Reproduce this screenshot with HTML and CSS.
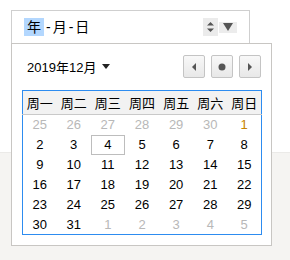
FILE: index.html
```html
<!DOCTYPE html>
<html lang="zh-CN">
<head>
  <meta charset="UTF-8">
  <title>日期选择</title>
  <link rel="stylesheet" href="styles.css">
</head>
<body>

  <div class="page-top">
    <div class="date-input">
      <span class="seg seg-active">年</span><span class="sep">-</span><span class="seg">月</span><span class="sep">-</span><span class="seg">日</span>
      <span class="spin">
        <svg width="9" height="14" viewBox="0 0 9 14"><path d="M1 5.5L4.5 2L8 5.5Z M1 8.5L4.5 12L8 8.5Z" fill="#555"/></svg>
      </span>
      <span class="drop">
        <svg width="10" height="8" viewBox="0 0 10 8"><path d="M0 0H10L5 8Z" fill="#555"/></svg>
      </span>
    </div>
  </div>
  <div class="page-foot"></div>

  <div class="picker">
    <div class="picker-head">
      <span class="month">2019年12月 <svg width="8" height="5" viewBox="0 0 8 5"><path d="M0 0H8L4 5Z" fill="#222"/></svg></span>
      <div class="nav">
        <button class="nav-btn"><svg width="6" height="8" viewBox="0 0 6 8"><path d="M5 0V8L1 4Z" fill="#555"/></svg></button>
        <button class="nav-btn"><svg width="8" height="8" viewBox="0 0 8 8"><circle cx="4" cy="4" r="3.5" fill="#555"/></svg></button>
        <button class="nav-btn"><svg width="6" height="8" viewBox="0 0 6 8"><path d="M1 0V8L5 4Z" fill="#555"/></svg></button>
      </div>
    </div>

    <table class="cal">
      <thead>
        <tr><th>周一</th><th>周二</th><th>周三</th><th>周四</th><th>周五</th><th>周六</th><th>周日</th></tr>
      </thead>
      <tbody>
        <tr><td class="other">25</td><td class="other">26</td><td class="other">27</td><td class="other">28</td><td class="other">29</td><td class="other">30</td><td class="first">1</td></tr>
        <tr><td>2</td><td>3</td><td class="today">4</td><td>5</td><td>6</td><td>7</td><td>8</td></tr>
        <tr><td>9</td><td>10</td><td>11</td><td>12</td><td>13</td><td>14</td><td>15</td></tr>
        <tr><td>16</td><td>17</td><td>18</td><td>19</td><td>20</td><td>21</td><td>22</td></tr>
        <tr><td>23</td><td>24</td><td>25</td><td>26</td><td>27</td><td>28</td><td>29</td></tr>
        <tr><td>30</td><td>31</td><td class="other">1</td><td class="other">2</td><td class="other">3</td><td class="other">4</td><td class="other">5</td></tr>
      </tbody>
    </table>
  </div>

</body>
</html>
```

FILE: styles.css
```css
body {
  margin: 0;
  font-family: "Liberation Sans", "Noto Sans CJK SC", sans-serif;
  color: #000;
  background-color: #f5f4f2;
}

.page-top {
  height: 152px;
  background-color: #fff;
  padding-top: 10px;
  box-sizing: border-box;
}

.page-foot {
  height: 108px;
  border-top: 1px solid #ebeae8;
  box-sizing: border-box;
}

.date-input {
  margin-left: 11px;
  width: 239px;
  height: 34px;
  border: 1px solid #cfcfcf;
  box-sizing: border-box;
  display: flex;
  align-items: center;
  padding-left: 12px;
  font-size: 14px;
}

.seg {
  display: inline-block;
  line-height: 18px;
}

.seg-active {
  background-color: #b3d7fe;
  padding: 0 3px;
}

.sep {
  padding: 0 2px;
}

.spin {
  margin-left: auto;
  width: 15px;
  height: 18px;
  background-color: #ebebeb;
  display: flex;
  align-items: center;
  justify-content: center;
}

.drop {
  margin-left: 1px;
  margin-right: 12px;
  width: 18px;
  height: 11px;
  background-color: #ececec;
  display: flex;
  align-items: center;
  justify-content: center;
}

.picker {
  position: absolute;
  left: 11px;
  top: 43px;
  width: 261px;
  height: 203px;
  box-sizing: border-box;
  border: 1px solid #c8c6c3;
  background-color: #fff;
  padding: 11px 10px 0 10px;
}

.picker-head {
  display: flex;
  align-items: center;
  justify-content: space-between;
  height: 23px;
}

.month {
  padding-left: 5px;
  font-size: 13px;
  display: flex;
  align-items: center;
  gap: 6px;
}

.nav {
  display: flex;
  gap: 6px;
}

.nav-btn {
  width: 22px;
  height: 23px;
  padding: 0;
  border: 1px solid #c4c4c4;
  border-radius: 2px;
  background: linear-gradient(#f8f8f8, #e8e8e8);
  display: flex;
  align-items: center;
  justify-content: center;
}

.cal {
  margin-top: 12px;
  width: 240px;
  border: 1px solid #2d8cf0;
  border-collapse: collapse;
  table-layout: fixed;
  font-size: 13px;
}

.cal th {
  height: 23px;
  font-weight: normal;
  background-color: #f2f2f2;
  border-bottom: 1px solid #c9c9c9;
  padding: 0;
}

.cal td {
  height: 20px;
  padding: 0;
  text-align: center;
  box-sizing: border-box;
}

.cal td.other {
  color: #b8b8b8;
}

.cal td.first {
  color: #c88400;
}

.cal td.today {
  outline: 1px solid #bdbdbd;
  outline-offset: -1px;
}
```
